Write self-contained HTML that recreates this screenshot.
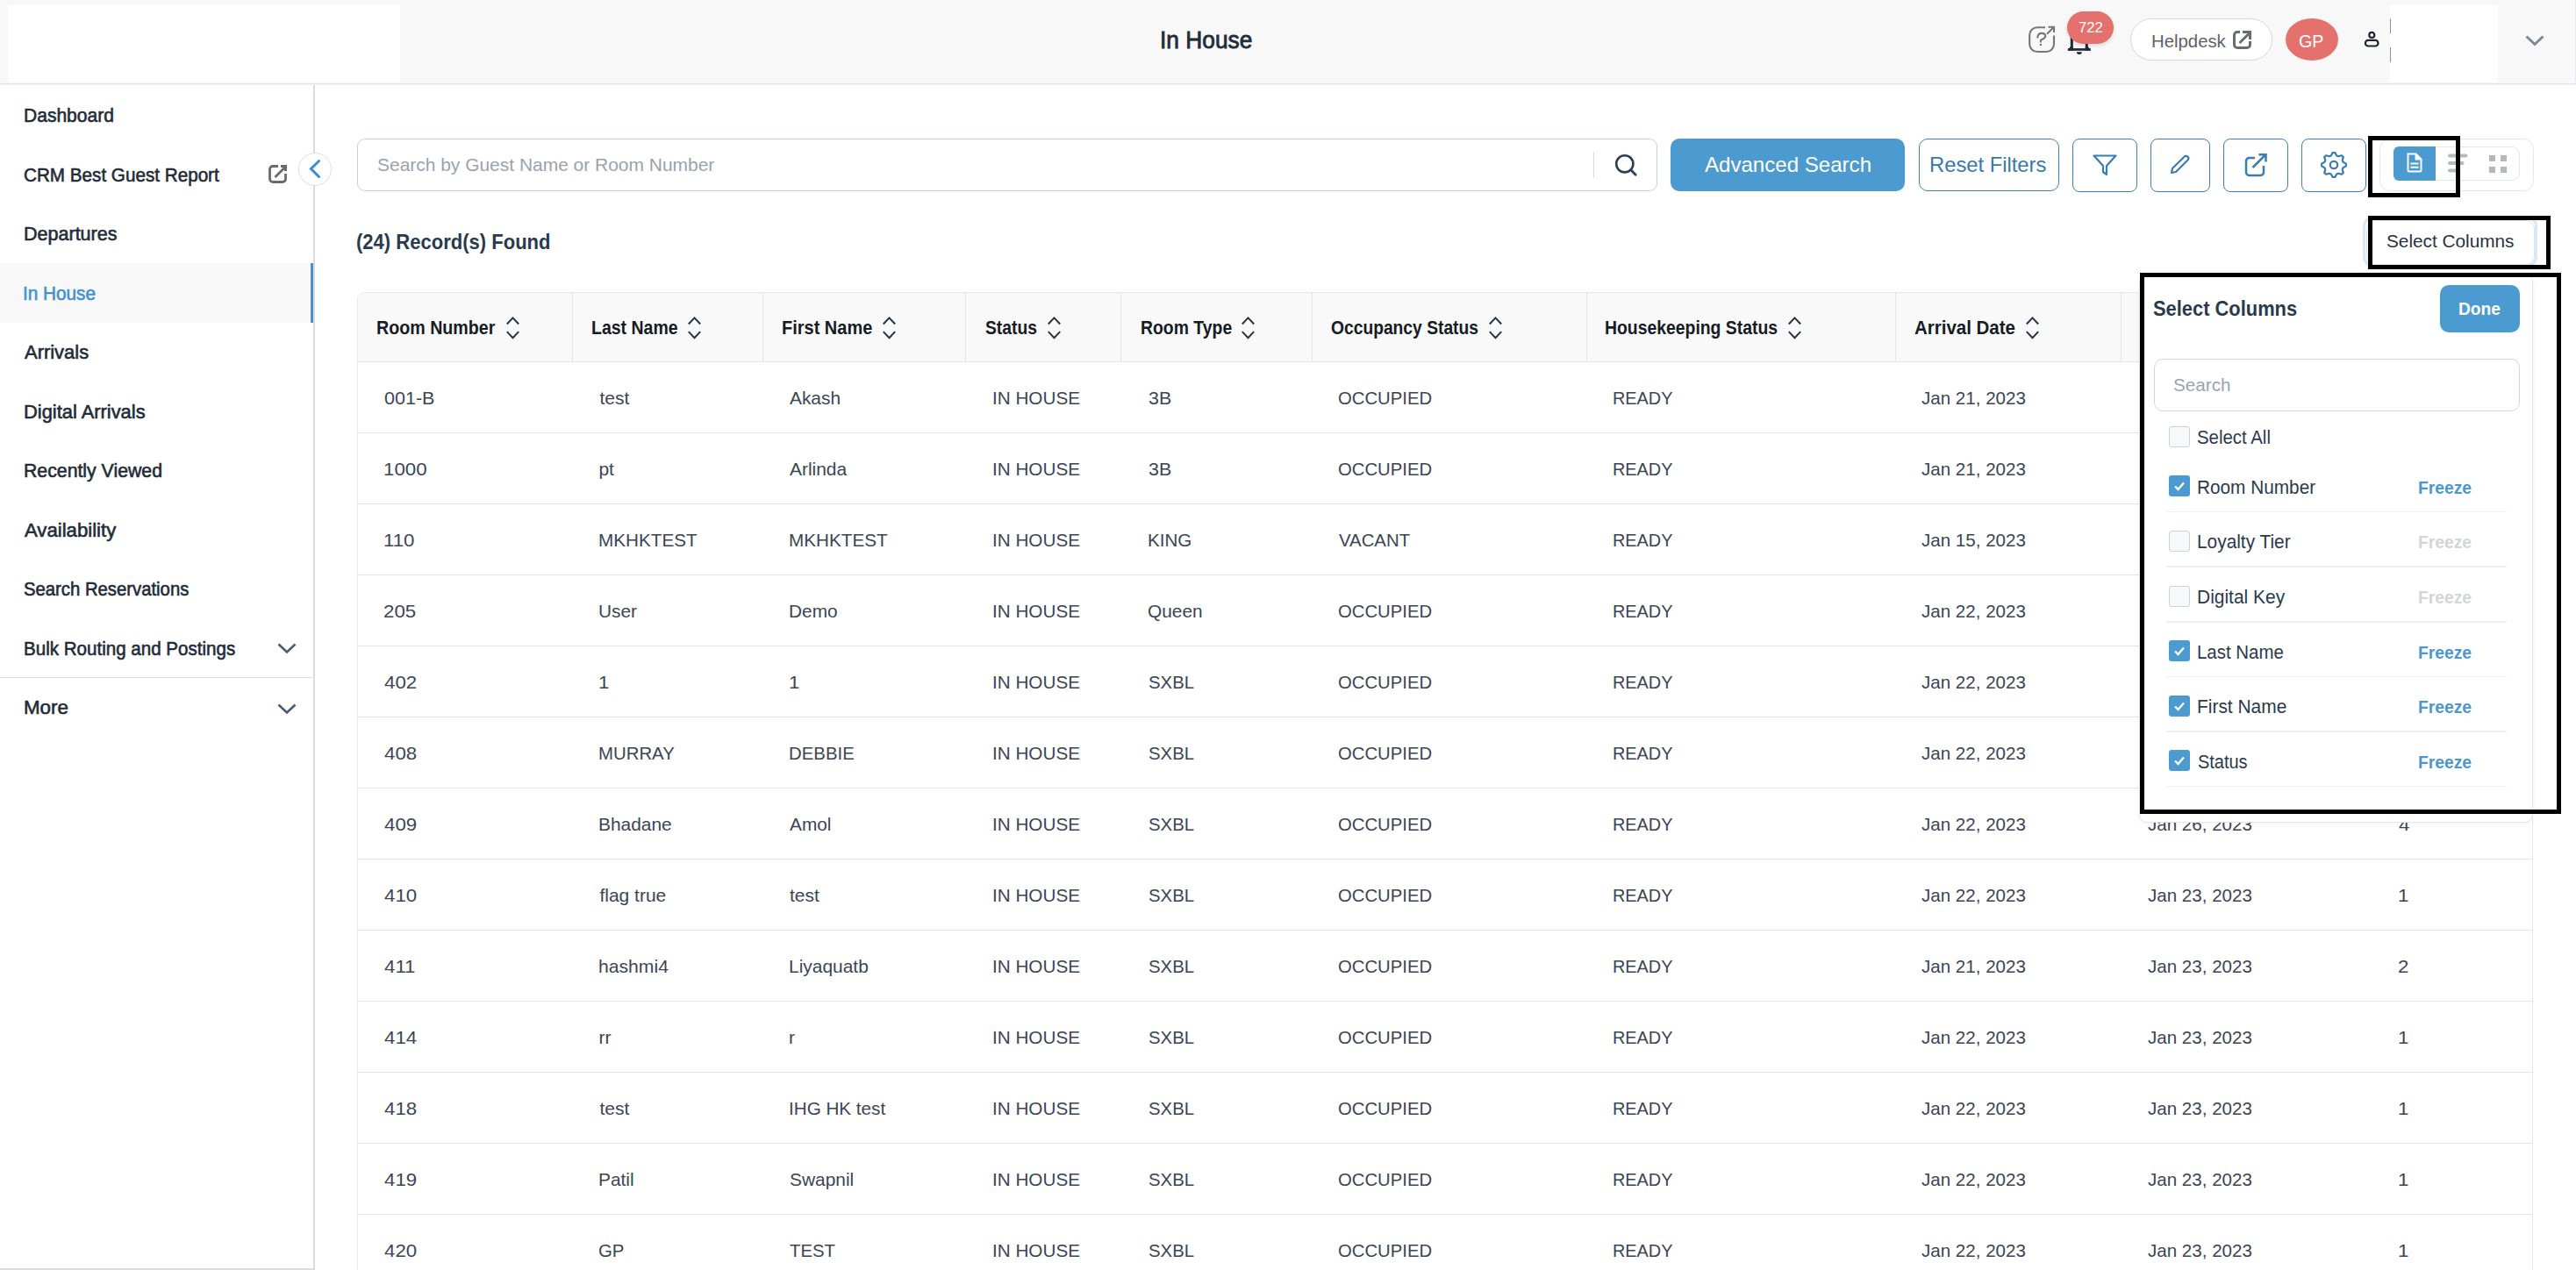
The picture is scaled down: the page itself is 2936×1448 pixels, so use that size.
<!DOCTYPE html>
<html><head><meta charset="utf-8"><title>In House</title>
<style>
html,body{margin:0;padding:0;}
body{width:2936px;height:1448px;overflow:hidden;position:relative;background:#fff;font-family:"Liberation Sans", sans-serif;}
</style></head><body>
<div style="position:absolute;left:0.00px;top:0.00px;width:2936.00px;height:95.00px;box-sizing:border-box;background:#f8f8f8"></div>
<div style="position:absolute;left:0.00px;top:95.00px;width:2936.00px;height:1.00px;box-sizing:border-box;background:#e2e5e8"></div>
<div style="position:absolute;left:0.00px;top:96.00px;width:2936.00px;height:1.00px;box-sizing:border-box;background:#eff1f2"></div>
<div style="position:absolute;left:9.00px;top:6.00px;width:447.00px;height:87.00px;box-sizing:border-box;background:#ffffff"></div>
<div style="position:absolute;left:1322.35px;top:32.94px;font-size:27px;line-height:27px;font-weight:normal;color:#232c39;white-space:nowrap;transform:scaleX(0.9748);transform-origin:0 0;-webkit-text-stroke:0.8px #232c39;">In House</div>
<svg style="position:absolute;left:2312.00px;top:30.00px;overflow:visible" width="30" height="30" viewBox="0 0 30 30"><path d="M19 1.2 H10 A8.8 8.8 0 0 0 1.2 10 V20.2 A8.8 8.8 0 0 0 10 29 H20.2 A8.8 8.8 0 0 0 29 20.2 V10.5" fill="none" stroke="#777" stroke-width="2.1"/><path d="M21 8.8 L29 0.8 M22.5 0.8 H29 V7" fill="none" stroke="#777" stroke-width="2.1"/><path d="M10.35 12.6 C10.6 9.6 12.6 7.9 15.1 7.9 C17.6 7.9 19.2 9.4 19.2 11.4 C19.2 13.6 16.8 14.2 14.8 15.2 C14 15.7 13.8 16.4 13.8 17.8" fill="none" stroke="#777" stroke-width="2.1" stroke-linecap="round"/><circle cx="14" cy="20.9" r="1.25" fill="#777"/></svg>
<svg style="position:absolute;left:2356.00px;top:28.00px;overflow:visible" width="28" height="36" viewBox="0 0 28 36"><path d="M5.3 0 V27.5 M22.3 0 V27.5" stroke="#222b38" stroke-width="3"/><path d="M3.8 25 L0.8 29.8 H6.8 V25Z M23.8 25 L26.8 29.8 H20.8 V25Z" fill="#222b38"/><rect x="0.8" y="27.1" width="26" height="2.7" fill="#222b38"/><path d="M10.8 31.3 H16.8 A3 2.8 0 0 1 10.8 31.3Z" fill="#222b38"/></svg>
<div style="position:absolute;left:2356px;top:12.5px;width:53px;height:37px;border-radius:19px;background:#e5716d;box-shadow:0 2px 4px rgba(0,0,0,0.12)"></div>
<div style="position:absolute;left:2368.90px;top:22.61px;font-size:17px;line-height:17px;font-weight:normal;color:#ffffff;white-space:nowrap;transform:scaleX(0.9782);transform-origin:0 0;">722</div>
<div style="position:absolute;left:2428.00px;top:21.00px;width:162.00px;height:48.00px;box-sizing:border-box;background:#fff;border:1.5px solid #d5d8e2;border-radius:24px"></div>
<div style="position:absolute;left:2451.53px;top:36.32px;font-size:21px;line-height:21px;font-weight:normal;color:#5f6267;white-space:nowrap;transform:scaleX(0.9684);transform-origin:0 0;">Helpdesk</div>
<svg style="position:absolute;left:2545.00px;top:35.00px;overflow:visible" width="21" height="21" viewBox="0 0 21 21"><path d="M8 1.5 H5 A3.5 3.5 0 0 0 1.5 5 V16 A3.5 3.5 0 0 0 5 19.5 H16 A3.5 3.5 0 0 0 19.5 16 V12" fill="none" stroke="#6b6c6f" stroke-width="3"/><path d="M7.5 14 L18 3.5" stroke="#6b6c6f" stroke-width="3"/><path d="M11 0 H21 V10 H18 V3 H11Z" fill="#6b6c6f"/></svg>
<div style="position:absolute;left:2605.00px;top:21.00px;width:60.00px;height:48.00px;box-sizing:border-box;background:#e5716d;border-radius:50%"></div>
<div style="position:absolute;left:2620.22px;top:36.57px;font-size:20px;line-height:20px;font-weight:normal;color:#ffffff;white-space:nowrap;transform:scaleX(0.9834);transform-origin:0 0;">GP</div>
<svg style="position:absolute;left:2694.00px;top:35.00px;overflow:visible" width="18" height="19" viewBox="0 0 18 19"><circle cx="9.3" cy="4.9" r="3.0" fill="none" stroke="#1c2633" stroke-width="2.2"/><rect x="1.9" y="10.9" width="14.6" height="6.6" rx="3.3" fill="none" stroke="#1c2633" stroke-width="2.2"/></svg>
<div style="position:absolute;left:2724.00px;top:6.00px;width:123.00px;height:88.00px;box-sizing:border-box;background:#ffffff"></div>
<div style="position:absolute;left:2935.00px;top:0.00px;width:1.00px;height:95.00px;box-sizing:border-box;background:#e9ebec"></div>
<div style="position:absolute;left:2724.00px;top:21.00px;width:1.20px;height:16.60px;box-sizing:border-box;background:#8e9398"></div>
<div style="position:absolute;left:2724.00px;top:54.00px;width:1.20px;height:16.70px;box-sizing:border-box;background:#8e9398"></div>
<svg style="position:absolute;left:2878.00px;top:40.00px;overflow:visible" width="22" height="12" viewBox="0 0 22 12"><path d="M1.5 1.5 L11 10.5 L20.5 1.5" fill="none" stroke="#7c8a94" stroke-width="3"/></svg>
<div style="position:absolute;left:357.00px;top:97.00px;width:2.00px;height:1351.00px;box-sizing:border-box;background:#dcdcdc"></div>
<div style="position:absolute;left:0.00px;top:1446.00px;width:359.00px;height:2.00px;box-sizing:border-box;background:#dcdcdc"></div>
<div style="position:absolute;left:26.64px;top:121.08px;font-size:22px;line-height:22px;font-weight:normal;color:#222b38;white-space:nowrap;transform:scaleX(0.9564);transform-origin:0 0;-webkit-text-stroke:0.6px #222b38;">Dashboard</div>
<div style="position:absolute;left:26.66px;top:188.58px;font-size:22px;line-height:22px;font-weight:normal;color:#222b38;white-space:nowrap;transform:scaleX(0.9391);transform-origin:0 0;-webkit-text-stroke:0.6px #222b38;">CRM Best Guest Report</div>
<div style="position:absolute;left:26.62px;top:256.08px;font-size:22px;line-height:22px;font-weight:normal;color:#222b38;white-space:nowrap;transform:scaleX(0.9784);transform-origin:0 0;-webkit-text-stroke:0.6px #222b38;">Departures</div>
<div style="position:absolute;left:0.00px;top:300.00px;width:357.00px;height:67.50px;box-sizing:border-box;background:#f8f8f8"></div>
<div style="position:absolute;left:354.00px;top:300.00px;width:3.00px;height:67.50px;box-sizing:border-box;background:#4a90c9"></div>
<div style="position:absolute;left:25.71px;top:323.58px;font-size:22px;line-height:22px;font-weight:normal;color:#4191cc;white-space:nowrap;transform:scaleX(0.9427);transform-origin:0 0;-webkit-text-stroke:0.6px #4191cc;">In House</div>
<div style="position:absolute;left:27.60px;top:391.08px;font-size:22px;line-height:22px;font-weight:normal;color:#222b38;white-space:nowrap;transform:scaleX(0.9968);transform-origin:0 0;-webkit-text-stroke:0.6px #222b38;">Arrivals</div>
<div style="position:absolute;left:26.61px;top:458.58px;font-size:22px;line-height:22px;font-weight:normal;color:#222b38;white-space:nowrap;transform:scaleX(0.9944);transform-origin:0 0;-webkit-text-stroke:0.6px #222b38;">Digital Arrivals</div>
<div style="position:absolute;left:26.63px;top:526.08px;font-size:22px;line-height:22px;font-weight:normal;color:#222b38;white-space:nowrap;transform:scaleX(0.9663);transform-origin:0 0;-webkit-text-stroke:0.6px #222b38;">Recently Viewed</div>
<div style="position:absolute;left:27.60px;top:593.58px;font-size:22px;line-height:22px;font-weight:normal;color:#222b38;white-space:nowrap;transform:scaleX(1.0064);transform-origin:0 0;-webkit-text-stroke:0.6px #222b38;">Availability</div>
<div style="position:absolute;left:26.68px;top:661.08px;font-size:22px;line-height:22px;font-weight:normal;color:#222b38;white-space:nowrap;transform:scaleX(0.9222);transform-origin:0 0;-webkit-text-stroke:0.6px #222b38;">Search Reservations</div>
<div style="position:absolute;left:26.67px;top:728.58px;font-size:22px;line-height:22px;font-weight:normal;color:#222b38;white-space:nowrap;transform:scaleX(0.9348);transform-origin:0 0;-webkit-text-stroke:0.6px #222b38;">Bulk Routing and Postings</div>
<div style="position:absolute;left:0.00px;top:772.00px;width:357.00px;height:1.00px;box-sizing:border-box;background:#dedede"></div>
<div style="position:absolute;left:26.59px;top:795.98px;font-size:22px;line-height:22px;font-weight:normal;color:#222b38;white-space:nowrap;transform:scaleX(1.0146);transform-origin:0 0;-webkit-text-stroke:0.6px #222b38;">More</div>
<svg style="position:absolute;left:316.00px;top:733.00px;overflow:visible" width="22" height="13" viewBox="0 0 22 13"><path d="M1.5 1.5 L11 10.5 L20.5 1.5" fill="none" stroke="#4b5a75" stroke-width="2.6"/></svg>
<svg style="position:absolute;left:316.00px;top:801.50px;overflow:visible" width="22" height="13" viewBox="0 0 22 13"><path d="M1.5 1.5 L11 10.5 L20.5 1.5" fill="none" stroke="#4b5a75" stroke-width="2.6"/></svg>
<svg style="position:absolute;left:306.00px;top:188.00px;overflow:visible" width="21" height="21" viewBox="0 0 21 21"><path d="M11 1.5 H5 A3.5 3.5 0 0 0 1.5 5 V16 A3.5 3.5 0 0 0 5 19.5 H16 A3.5 3.5 0 0 0 19.5 16 V10" fill="none" stroke="#6a6b6e" stroke-width="2.8"/><path d="M7.5 14 L18 3.5" stroke="#6a6b6e" stroke-width="2.8"/><path d="M14 0 H21 V7 H18 V3 H14Z" fill="#6a6b6e"/></svg>
<div style="position:absolute;left:340.00px;top:174.00px;width:38.00px;height:38.00px;box-sizing:border-box;background:#fff;border:1.5px solid #dedede;border-radius:50%"></div>
<svg style="position:absolute;left:352.00px;top:182.00px;overflow:visible" width="14" height="22" viewBox="0 0 14 22"><path d="M11.5 1.5 L2.5 10.5 L11.5 19.5" fill="none" stroke="#3a8dd3" stroke-width="3" stroke-linecap="round"/></svg>
<div style="position:absolute;left:407.00px;top:158.00px;width:1482.00px;height:60.00px;box-sizing:border-box;background:#fff;border:1.5px solid #c9d2da;border-radius:9px"></div>
<div style="position:absolute;left:429.70px;top:177.32px;font-size:21px;line-height:21px;font-weight:normal;color:#98a3ad;white-space:nowrap;transform:scaleX(0.9978);transform-origin:0 0;">Search by Guest Name or Room Number</div>
<div style="position:absolute;left:1816.00px;top:173.00px;width:1.00px;height:30.00px;box-sizing:border-box;background:#d3d8dd"></div>
<svg style="position:absolute;left:1840.00px;top:175.00px;overflow:visible" width="26" height="26" viewBox="0 0 26 26"><circle cx="11.8" cy="11.8" r="9.6" fill="none" stroke="#2d3e4f" stroke-width="2.6"/><path d="M18.8 18.8 L24.2 24.2" stroke="#2d3e4f" stroke-width="2.8" stroke-linecap="round"/></svg>
<div style="position:absolute;left:1904.00px;top:158.00px;width:267.00px;height:60.00px;box-sizing:border-box;background:#4b9ad0;border-radius:10px"></div>
<div style="position:absolute;left:1943.00px;top:175.58px;font-size:24px;line-height:24px;font-weight:normal;color:#ffffff;white-space:nowrap;transform:scaleX(1.0031);transform-origin:0 0;">Advanced Search</div>
<div style="position:absolute;left:2186.50px;top:158.00px;width:160.50px;height:60.00px;box-sizing:border-box;background:#fff;border:1.5px solid #3e80b2;border-radius:10px"></div>
<div style="position:absolute;left:2199.41px;top:175.58px;font-size:24px;line-height:24px;font-weight:normal;color:#3a78aa;white-space:nowrap;transform:scaleX(0.9903);transform-origin:0 0;">Reset Filters</div>
<div style="position:absolute;left:2362.00px;top:158.00px;width:74.00px;height:61.00px;box-sizing:border-box;background:#fff;border:1.5px solid #3e80b2;border-radius:8px"></div>
<div style="position:absolute;left:2451.00px;top:158.00px;width:68.00px;height:61.00px;box-sizing:border-box;background:#fff;border:1.5px solid #3e80b2;border-radius:8px"></div>
<div style="position:absolute;left:2534.00px;top:158.00px;width:74.00px;height:61.00px;box-sizing:border-box;background:#fff;border:1.5px solid #3e80b2;border-radius:8px"></div>
<div style="position:absolute;left:2623.00px;top:158.00px;width:74.00px;height:61.00px;box-sizing:border-box;background:#fff;border:1.5px solid #3e80b2;border-radius:8px"></div>
<svg style="position:absolute;left:2385.00px;top:176.00px;overflow:visible" width="28" height="24" viewBox="0 0 28 24"><path d="M1.5 1.5 H26.5 L16 13 V23 L12 20 V13 Z" fill="none" stroke="#3a7db0" stroke-width="2.2" stroke-linejoin="round"/></svg>
<svg style="position:absolute;left:2473.00px;top:177.00px;overflow:visible" width="23" height="22" viewBox="0 0 23 22"><path d="M2 20 L3 15 L16.5 1.8 A2.2 2.2 0 0 1 20.5 5.5 L7 19 Z" fill="none" stroke="#3a7db0" stroke-width="2.2" stroke-linejoin="round"/></svg>
<svg style="position:absolute;left:2558.00px;top:175.00px;overflow:visible" width="26" height="26" viewBox="0 0 26 26"><path d="M12 5 H5.5 A3.5 3.5 0 0 0 2 8.5 V21.5 A3.5 3.5 0 0 0 5.5 25 H18.5 A3.5 3.5 0 0 0 22 21.5 V14" fill="none" stroke="#3a7db0" stroke-width="2.5"/><path d="M9.5 16 L24.5 1.2 M16.5 1.2 H24.5 V9.5" fill="none" stroke="#3a7db0" stroke-width="2.5"/></svg>
<svg style="position:absolute;left:2645.00px;top:173.00px;overflow:visible" width="30" height="30" viewBox="0 0 30 30"><path d="M13.63 1.07 L16.37 1.07 L18.19 4.47 L20.19 5.30 L23.88 4.18 L25.82 6.12 L24.70 9.81 L25.53 11.81 L28.93 13.63 L28.93 16.37 L25.53 18.19 L24.70 20.19 L25.82 23.88 L23.88 25.82 L20.19 24.70 L18.19 25.53 L16.37 28.93 L13.63 28.93 L11.81 25.53 L9.81 24.70 L6.12 25.82 L4.18 23.88 L5.30 20.19 L4.47 18.19 L1.07 16.37 L1.07 13.63 L4.47 11.81 L5.30 9.81 L4.18 6.12 L6.12 4.18 L9.81 5.30 L11.81 4.47Z" fill="none" stroke="#3a7db0" stroke-width="2.2" stroke-linejoin="round"/><circle cx="15" cy="15" r="4.2" fill="none" stroke="#3a7db0" stroke-width="2.2"/></svg>
<div style="position:absolute;left:2712.00px;top:158.00px;width:176.00px;height:60.00px;box-sizing:border-box;background:#fff;border:1.5px solid #e4e8eb;border-radius:12px"></div>
<div style="position:absolute;left:2728.00px;top:167.00px;width:144.00px;height:39.00px;box-sizing:border-box;background:#fff;border:1.5px solid #e4e8eb;border-radius:9px"></div>
<div style="position:absolute;left:2728px;top:167px;width:48px;height:39px;background:#4b9ad0;border-radius:6px 0 0 6px"></div>
<svg style="position:absolute;left:2743.00px;top:173.50px;overflow:visible" width="18" height="23" viewBox="0 0 18 23"><path d="M1.5 1.5 H10.5 L16.5 7.5 V20 A1.5 1.5 0 0 1 15 21.5 H3 A1.5 1.5 0 0 1 1.5 20 Z" fill="none" stroke="#fff" stroke-width="2"/><path d="M4.5 12.5 H13.5 M4.5 16.8 H13.5" stroke="#fff" stroke-width="2"/><path d="M10.3 1.5 V7.7 H16.5 Z" fill="#fff" stroke="#fff" stroke-width="1.6" stroke-linejoin="round"/></svg>
<svg style="position:absolute;left:2790.00px;top:175.00px;overflow:visible" width="23" height="23" viewBox="0 0 23 23"><path d="M2 2.6 H20.5 M2 11 H16.5 M2 19.6 H9" stroke="#b4babf" stroke-width="4" stroke-linecap="round"/></svg>
<div style="position:absolute;left:2837.00px;top:177.00px;width:7.00px;height:7.00px;box-sizing:border-box;background:#b1b8be"></div>
<div style="position:absolute;left:2837.00px;top:190.00px;width:7.00px;height:7.00px;box-sizing:border-box;background:#b1b8be"></div>
<div style="position:absolute;left:2850.00px;top:177.00px;width:7.00px;height:7.00px;box-sizing:border-box;background:#b1b8be"></div>
<div style="position:absolute;left:2850.00px;top:190.00px;width:7.00px;height:7.00px;box-sizing:border-box;background:#b1b8be"></div>
<div style="position:absolute;left:2699.00px;top:155.00px;width:104.50px;height:69.50px;box-sizing:border-box;border:5px solid #000"></div>
<div style="position:absolute;left:406.08px;top:264.48px;font-size:24px;line-height:24px;font-weight:bold;color:#2a3a4e;white-space:nowrap;transform:scaleX(0.9179);transform-origin:0 0;">(24) Record(s) Found</div>
<div style="position:absolute;left:2693.00px;top:246.00px;width:199.00px;height:59.00px;box-sizing:border-box;border:3px solid #d8e8f6;border-radius:12px"></div>
<div style="position:absolute;left:2696.50px;top:250.50px;width:192.50px;height:51.00px;box-sizing:border-box;background:#fff;border:1px solid #dfe3e7;border-radius:10px"></div>
<div style="position:absolute;left:2720.10px;top:265.15px;font-size:20.5px;line-height:20.5px;font-weight:normal;color:#2a3240;white-space:nowrap;transform:scaleX(1.0132);transform-origin:0 0;">Select Columns</div>
<div style="position:absolute;left:2699.00px;top:246.00px;width:208.00px;height:60.50px;box-sizing:border-box;border:5px solid #000"></div>
<div style="position:absolute;left:407px;top:333px;width:2480px;height:1135px;box-sizing:border-box;border:1.5px solid #e6e9ec;border-radius:9px;background:#fff"></div>
<div style="position:absolute;left:408px;top:334px;width:2478px;height:78px;background:#f9f9f9;border-radius:8px 8px 0 0"></div>
<div style="position:absolute;left:407.00px;top:411.50px;width:2480.00px;height:1.50px;box-sizing:border-box;background:#e6e8ea"></div>
<div style="position:absolute;left:652.20px;top:334.00px;width:1.00px;height:78.00px;box-sizing:border-box;background:#e4e6e8"></div>
<div style="position:absolute;left:869.30px;top:334.00px;width:1.00px;height:78.00px;box-sizing:border-box;background:#e4e6e8"></div>
<div style="position:absolute;left:1100.20px;top:334.00px;width:1.00px;height:78.00px;box-sizing:border-box;background:#e4e6e8"></div>
<div style="position:absolute;left:1277.40px;top:334.00px;width:1.00px;height:78.00px;box-sizing:border-box;background:#e4e6e8"></div>
<div style="position:absolute;left:1495.30px;top:334.00px;width:1.00px;height:78.00px;box-sizing:border-box;background:#e4e6e8"></div>
<div style="position:absolute;left:1807.60px;top:334.00px;width:1.00px;height:78.00px;box-sizing:border-box;background:#e4e6e8"></div>
<div style="position:absolute;left:2159.50px;top:334.00px;width:1.00px;height:78.00px;box-sizing:border-box;background:#e4e6e8"></div>
<div style="position:absolute;left:2417.10px;top:334.00px;width:1.00px;height:78.00px;box-sizing:border-box;background:#e4e6e8"></div>
<div style="position:absolute;left:2700.00px;top:334.00px;width:1.00px;height:78.00px;box-sizing:border-box;background:#e4e6e8"></div>
<div style="position:absolute;left:429.39px;top:363.50px;font-size:21.5px;line-height:21.5px;font-weight:bold;color:#161c25;white-space:nowrap;transform:scaleX(0.9144);transform-origin:0 0;">Room Number</div>
<svg style="position:absolute;left:576.90px;top:361.00px;overflow:visible" width="16" height="26" viewBox="0 0 16 26"><path d="M0.8 8.5 L7.5 1.4 L14.2 8.5 M0.8 17.1 L7.5 24.2 L14.2 17.1" fill="none" stroke="#243447" stroke-width="2"/></svg>
<div style="position:absolute;left:673.99px;top:363.50px;font-size:21.5px;line-height:21.5px;font-weight:bold;color:#161c25;white-space:nowrap;transform:scaleX(0.9074);transform-origin:0 0;">Last Name</div>
<svg style="position:absolute;left:784.20px;top:361.00px;overflow:visible" width="16" height="26" viewBox="0 0 16 26"><path d="M0.8 8.5 L7.5 1.4 L14.2 8.5 M0.8 17.1 L7.5 24.2 L14.2 17.1" fill="none" stroke="#243447" stroke-width="2"/></svg>
<div style="position:absolute;left:891.27px;top:363.50px;font-size:21.5px;line-height:21.5px;font-weight:bold;color:#161c25;white-space:nowrap;transform:scaleX(0.9295);transform-origin:0 0;">First Name</div>
<svg style="position:absolute;left:1006.10px;top:361.00px;overflow:visible" width="16" height="26" viewBox="0 0 16 26"><path d="M0.8 8.5 L7.5 1.4 L14.2 8.5 M0.8 17.1 L7.5 24.2 L14.2 17.1" fill="none" stroke="#243447" stroke-width="2"/></svg>
<div style="position:absolute;left:1123.40px;top:363.50px;font-size:21.5px;line-height:21.5px;font-weight:bold;color:#161c25;white-space:nowrap;transform:scaleX(0.8973);transform-origin:0 0;">Status</div>
<svg style="position:absolute;left:1193.90px;top:361.00px;overflow:visible" width="16" height="26" viewBox="0 0 16 26"><path d="M0.8 8.5 L7.5 1.4 L14.2 8.5 M0.8 17.1 L7.5 24.2 L14.2 17.1" fill="none" stroke="#243447" stroke-width="2"/></svg>
<div style="position:absolute;left:1299.70px;top:363.50px;font-size:21.5px;line-height:21.5px;font-weight:bold;color:#161c25;white-space:nowrap;transform:scaleX(0.9021);transform-origin:0 0;">Room Type</div>
<svg style="position:absolute;left:1415.40px;top:361.00px;overflow:visible" width="16" height="26" viewBox="0 0 16 26"><path d="M0.8 8.5 L7.5 1.4 L14.2 8.5 M0.8 17.1 L7.5 24.2 L14.2 17.1" fill="none" stroke="#243447" stroke-width="2"/></svg>
<div style="position:absolute;left:1517.40px;top:363.50px;font-size:21.5px;line-height:21.5px;font-weight:bold;color:#161c25;white-space:nowrap;transform:scaleX(0.8954);transform-origin:0 0;">Occupancy Status</div>
<svg style="position:absolute;left:1696.90px;top:361.00px;overflow:visible" width="16" height="26" viewBox="0 0 16 26"><path d="M0.8 8.5 L7.5 1.4 L14.2 8.5 M0.8 17.1 L7.5 24.2 L14.2 17.1" fill="none" stroke="#243447" stroke-width="2"/></svg>
<div style="position:absolute;left:1829.30px;top:363.50px;font-size:21.5px;line-height:21.5px;font-weight:bold;color:#161c25;white-space:nowrap;transform:scaleX(0.9013);transform-origin:0 0;">Housekeeping Status</div>
<svg style="position:absolute;left:2037.90px;top:361.00px;overflow:visible" width="16" height="26" viewBox="0 0 16 26"><path d="M0.8 8.5 L7.5 1.4 L14.2 8.5 M0.8 17.1 L7.5 24.2 L14.2 17.1" fill="none" stroke="#243447" stroke-width="2"/></svg>
<div style="position:absolute;left:2182.10px;top:363.50px;font-size:21.5px;line-height:21.5px;font-weight:bold;color:#161c25;white-space:nowrap;transform:scaleX(0.9525);transform-origin:0 0;">Arrival Date</div>
<svg style="position:absolute;left:2308.60px;top:361.00px;overflow:visible" width="16" height="26" viewBox="0 0 16 26"><path d="M0.8 8.5 L7.5 1.4 L14.2 8.5 M0.8 17.1 L7.5 24.2 L14.2 17.1" fill="none" stroke="#243447" stroke-width="2"/></svg>
<div style="position:absolute;left:2438.00px;top:363.50px;font-size:21.5px;line-height:21.5px;font-weight:bold;color:#161c25;white-space:nowrap;">Departure Date</div>
<div style="position:absolute;left:2722.00px;top:363.50px;font-size:21.5px;line-height:21.5px;font-weight:bold;color:#161c25;white-space:nowrap;">Adults</div>
<div style="position:absolute;left:408.00px;top:493.00px;width:2478.00px;height:1.00px;box-sizing:border-box;background:#e3e6e9"></div>
<div style="position:absolute;left:438.00px;top:443.02px;font-size:21px;line-height:21px;font-weight:normal;color:#3b4555;white-space:nowrap;transform:scaleX(1.0240);transform-origin:0 0;">001-B</div>
<div style="position:absolute;left:683.40px;top:443.02px;font-size:21px;line-height:21px;font-weight:normal;color:#3b4555;white-space:nowrap;">test</div>
<div style="position:absolute;left:900.00px;top:443.02px;font-size:21px;line-height:21px;font-weight:normal;color:#3b4555;white-space:nowrap;transform:scaleX(0.9940);transform-origin:0 0;">Akash</div>
<div style="position:absolute;left:1131.02px;top:443.02px;font-size:21px;line-height:21px;font-weight:normal;color:#3b4555;white-space:nowrap;transform:scaleX(0.9850);transform-origin:0 0;">IN HOUSE</div>
<div style="position:absolute;left:1308.60px;top:443.02px;font-size:21px;line-height:21px;font-weight:normal;color:#3b4555;white-space:nowrap;transform:scaleX(1.0200);transform-origin:0 0;">3B</div>
<div style="position:absolute;left:1525.03px;top:443.02px;font-size:21px;line-height:21px;font-weight:normal;color:#3b4555;white-space:nowrap;transform:scaleX(0.9660);transform-origin:0 0;">OCCUPIED</div>
<div style="position:absolute;left:1837.85px;top:443.02px;font-size:21px;line-height:21px;font-weight:normal;color:#3b4555;white-space:nowrap;transform:scaleX(0.9460);transform-origin:0 0;">READY</div>
<div style="position:absolute;left:2190.20px;top:443.02px;font-size:21px;line-height:21px;font-weight:normal;color:#3b4555;white-space:nowrap;transform:scaleX(0.9790);transform-origin:0 0;">Jan 21, 2023</div>
<div style="position:absolute;left:2448.00px;top:443.02px;font-size:21px;line-height:21px;font-weight:normal;color:#3b4555;white-space:nowrap;transform:scaleX(0.9790);transform-origin:0 0;">Jan 23, 2023</div>
<div style="position:absolute;left:2732.94px;top:443.02px;font-size:21px;line-height:21px;font-weight:normal;color:#3b4555;white-space:nowrap;transform:scaleX(1.0600);transform-origin:0 0;">1</div>
<div style="position:absolute;left:408.00px;top:574.00px;width:2478.00px;height:1.00px;box-sizing:border-box;background:#e3e6e9"></div>
<div style="position:absolute;left:436.94px;top:524.02px;font-size:21px;line-height:21px;font-weight:normal;color:#3b4555;white-space:nowrap;transform:scaleX(1.0600);transform-origin:0 0;">1000</div>
<div style="position:absolute;left:682.40px;top:524.02px;font-size:21px;line-height:21px;font-weight:normal;color:#3b4555;white-space:nowrap;">pt</div>
<div style="position:absolute;left:900.00px;top:524.02px;font-size:21px;line-height:21px;font-weight:normal;color:#3b4555;white-space:nowrap;transform:scaleX(0.9957);transform-origin:0 0;">Arlinda</div>
<div style="position:absolute;left:1131.02px;top:524.02px;font-size:21px;line-height:21px;font-weight:normal;color:#3b4555;white-space:nowrap;transform:scaleX(0.9850);transform-origin:0 0;">IN HOUSE</div>
<div style="position:absolute;left:1308.60px;top:524.02px;font-size:21px;line-height:21px;font-weight:normal;color:#3b4555;white-space:nowrap;transform:scaleX(1.0200);transform-origin:0 0;">3B</div>
<div style="position:absolute;left:1525.03px;top:524.02px;font-size:21px;line-height:21px;font-weight:normal;color:#3b4555;white-space:nowrap;transform:scaleX(0.9660);transform-origin:0 0;">OCCUPIED</div>
<div style="position:absolute;left:1837.85px;top:524.02px;font-size:21px;line-height:21px;font-weight:normal;color:#3b4555;white-space:nowrap;transform:scaleX(0.9460);transform-origin:0 0;">READY</div>
<div style="position:absolute;left:2190.20px;top:524.02px;font-size:21px;line-height:21px;font-weight:normal;color:#3b4555;white-space:nowrap;transform:scaleX(0.9790);transform-origin:0 0;">Jan 21, 2023</div>
<div style="position:absolute;left:2448.00px;top:524.02px;font-size:21px;line-height:21px;font-weight:normal;color:#3b4555;white-space:nowrap;transform:scaleX(0.9790);transform-origin:0 0;">Jan 23, 2023</div>
<div style="position:absolute;left:2732.94px;top:524.02px;font-size:21px;line-height:21px;font-weight:normal;color:#3b4555;white-space:nowrap;transform:scaleX(1.0600);transform-origin:0 0;">1</div>
<div style="position:absolute;left:408.00px;top:655.00px;width:2478.00px;height:1.00px;box-sizing:border-box;background:#e3e6e9"></div>
<div style="position:absolute;left:436.94px;top:605.02px;font-size:21px;line-height:21px;font-weight:normal;color:#3b4555;white-space:nowrap;transform:scaleX(1.0600);transform-origin:0 0;">110</div>
<div style="position:absolute;left:682.41px;top:605.02px;font-size:21px;line-height:21px;font-weight:normal;color:#3b4555;white-space:nowrap;transform:scaleX(0.9850);transform-origin:0 0;">MKHKTEST</div>
<div style="position:absolute;left:899.01px;top:605.02px;font-size:21px;line-height:21px;font-weight:normal;color:#3b4555;white-space:nowrap;transform:scaleX(0.9850);transform-origin:0 0;">MKHKTEST</div>
<div style="position:absolute;left:1131.02px;top:605.02px;font-size:21px;line-height:21px;font-weight:normal;color:#3b4555;white-space:nowrap;transform:scaleX(0.9850);transform-origin:0 0;">IN HOUSE</div>
<div style="position:absolute;left:1307.62px;top:605.02px;font-size:21px;line-height:21px;font-weight:normal;color:#3b4555;white-space:nowrap;transform:scaleX(0.9800);transform-origin:0 0;">KING</div>
<div style="position:absolute;left:1526.00px;top:605.02px;font-size:21px;line-height:21px;font-weight:normal;color:#3b4555;white-space:nowrap;transform:scaleX(0.9700);transform-origin:0 0;">VACANT</div>
<div style="position:absolute;left:1837.85px;top:605.02px;font-size:21px;line-height:21px;font-weight:normal;color:#3b4555;white-space:nowrap;transform:scaleX(0.9460);transform-origin:0 0;">READY</div>
<div style="position:absolute;left:2190.20px;top:605.02px;font-size:21px;line-height:21px;font-weight:normal;color:#3b4555;white-space:nowrap;transform:scaleX(0.9790);transform-origin:0 0;">Jan 15, 2023</div>
<div style="position:absolute;left:2448.00px;top:605.02px;font-size:21px;line-height:21px;font-weight:normal;color:#3b4555;white-space:nowrap;transform:scaleX(0.9790);transform-origin:0 0;">Jan 23, 2023</div>
<div style="position:absolute;left:2732.94px;top:605.02px;font-size:21px;line-height:21px;font-weight:normal;color:#3b4555;white-space:nowrap;transform:scaleX(1.0600);transform-origin:0 0;">1</div>
<div style="position:absolute;left:408.00px;top:736.00px;width:2478.00px;height:1.00px;box-sizing:border-box;background:#e3e6e9"></div>
<div style="position:absolute;left:436.94px;top:686.02px;font-size:21px;line-height:21px;font-weight:normal;color:#3b4555;white-space:nowrap;transform:scaleX(1.0600);transform-origin:0 0;">205</div>
<div style="position:absolute;left:682.41px;top:686.02px;font-size:21px;line-height:21px;font-weight:normal;color:#3b4555;white-space:nowrap;transform:scaleX(0.9925);transform-origin:0 0;">User</div>
<div style="position:absolute;left:899.01px;top:686.02px;font-size:21px;line-height:21px;font-weight:normal;color:#3b4555;white-space:nowrap;transform:scaleX(0.9925);transform-origin:0 0;">Demo</div>
<div style="position:absolute;left:1131.02px;top:686.02px;font-size:21px;line-height:21px;font-weight:normal;color:#3b4555;white-space:nowrap;transform:scaleX(0.9850);transform-origin:0 0;">IN HOUSE</div>
<div style="position:absolute;left:1307.61px;top:686.02px;font-size:21px;line-height:21px;font-weight:normal;color:#3b4555;white-space:nowrap;transform:scaleX(0.9940);transform-origin:0 0;">Queen</div>
<div style="position:absolute;left:1525.03px;top:686.02px;font-size:21px;line-height:21px;font-weight:normal;color:#3b4555;white-space:nowrap;transform:scaleX(0.9660);transform-origin:0 0;">OCCUPIED</div>
<div style="position:absolute;left:1837.85px;top:686.02px;font-size:21px;line-height:21px;font-weight:normal;color:#3b4555;white-space:nowrap;transform:scaleX(0.9460);transform-origin:0 0;">READY</div>
<div style="position:absolute;left:2190.20px;top:686.02px;font-size:21px;line-height:21px;font-weight:normal;color:#3b4555;white-space:nowrap;transform:scaleX(0.9790);transform-origin:0 0;">Jan 22, 2023</div>
<div style="position:absolute;left:2448.00px;top:686.02px;font-size:21px;line-height:21px;font-weight:normal;color:#3b4555;white-space:nowrap;transform:scaleX(0.9790);transform-origin:0 0;">Jan 23, 2023</div>
<div style="position:absolute;left:2732.94px;top:686.02px;font-size:21px;line-height:21px;font-weight:normal;color:#3b4555;white-space:nowrap;transform:scaleX(1.0600);transform-origin:0 0;">1</div>
<div style="position:absolute;left:408.00px;top:817.00px;width:2478.00px;height:1.00px;box-sizing:border-box;background:#e3e6e9"></div>
<div style="position:absolute;left:438.00px;top:767.02px;font-size:21px;line-height:21px;font-weight:normal;color:#3b4555;white-space:nowrap;transform:scaleX(1.0600);transform-origin:0 0;">402</div>
<div style="position:absolute;left:682.34px;top:767.02px;font-size:21px;line-height:21px;font-weight:normal;color:#3b4555;white-space:nowrap;transform:scaleX(1.0600);transform-origin:0 0;">1</div>
<div style="position:absolute;left:898.94px;top:767.02px;font-size:21px;line-height:21px;font-weight:normal;color:#3b4555;white-space:nowrap;transform:scaleX(1.0600);transform-origin:0 0;">1</div>
<div style="position:absolute;left:1131.02px;top:767.02px;font-size:21px;line-height:21px;font-weight:normal;color:#3b4555;white-space:nowrap;transform:scaleX(0.9850);transform-origin:0 0;">IN HOUSE</div>
<div style="position:absolute;left:1308.60px;top:767.02px;font-size:21px;line-height:21px;font-weight:normal;color:#3b4555;white-space:nowrap;transform:scaleX(0.9700);transform-origin:0 0;">SXBL</div>
<div style="position:absolute;left:1525.03px;top:767.02px;font-size:21px;line-height:21px;font-weight:normal;color:#3b4555;white-space:nowrap;transform:scaleX(0.9660);transform-origin:0 0;">OCCUPIED</div>
<div style="position:absolute;left:1837.85px;top:767.02px;font-size:21px;line-height:21px;font-weight:normal;color:#3b4555;white-space:nowrap;transform:scaleX(0.9460);transform-origin:0 0;">READY</div>
<div style="position:absolute;left:2190.20px;top:767.02px;font-size:21px;line-height:21px;font-weight:normal;color:#3b4555;white-space:nowrap;transform:scaleX(0.9790);transform-origin:0 0;">Jan 22, 2023</div>
<div style="position:absolute;left:2448.00px;top:767.02px;font-size:21px;line-height:21px;font-weight:normal;color:#3b4555;white-space:nowrap;transform:scaleX(0.9790);transform-origin:0 0;">Jan 23, 2023</div>
<div style="position:absolute;left:2732.94px;top:767.02px;font-size:21px;line-height:21px;font-weight:normal;color:#3b4555;white-space:nowrap;transform:scaleX(1.0600);transform-origin:0 0;">1</div>
<div style="position:absolute;left:408.00px;top:898.00px;width:2478.00px;height:1.00px;box-sizing:border-box;background:#e3e6e9"></div>
<div style="position:absolute;left:438.00px;top:848.02px;font-size:21px;line-height:21px;font-weight:normal;color:#3b4555;white-space:nowrap;transform:scaleX(1.0600);transform-origin:0 0;">408</div>
<div style="position:absolute;left:682.43px;top:848.02px;font-size:21px;line-height:21px;font-weight:normal;color:#3b4555;white-space:nowrap;transform:scaleX(0.9700);transform-origin:0 0;">MURRAY</div>
<div style="position:absolute;left:899.03px;top:848.02px;font-size:21px;line-height:21px;font-weight:normal;color:#3b4555;white-space:nowrap;transform:scaleX(0.9700);transform-origin:0 0;">DEBBIE</div>
<div style="position:absolute;left:1131.02px;top:848.02px;font-size:21px;line-height:21px;font-weight:normal;color:#3b4555;white-space:nowrap;transform:scaleX(0.9850);transform-origin:0 0;">IN HOUSE</div>
<div style="position:absolute;left:1308.60px;top:848.02px;font-size:21px;line-height:21px;font-weight:normal;color:#3b4555;white-space:nowrap;transform:scaleX(0.9700);transform-origin:0 0;">SXBL</div>
<div style="position:absolute;left:1525.03px;top:848.02px;font-size:21px;line-height:21px;font-weight:normal;color:#3b4555;white-space:nowrap;transform:scaleX(0.9660);transform-origin:0 0;">OCCUPIED</div>
<div style="position:absolute;left:1837.85px;top:848.02px;font-size:21px;line-height:21px;font-weight:normal;color:#3b4555;white-space:nowrap;transform:scaleX(0.9460);transform-origin:0 0;">READY</div>
<div style="position:absolute;left:2190.20px;top:848.02px;font-size:21px;line-height:21px;font-weight:normal;color:#3b4555;white-space:nowrap;transform:scaleX(0.9790);transform-origin:0 0;">Jan 22, 2023</div>
<div style="position:absolute;left:2448.00px;top:848.02px;font-size:21px;line-height:21px;font-weight:normal;color:#3b4555;white-space:nowrap;transform:scaleX(0.9790);transform-origin:0 0;">Jan 23, 2023</div>
<div style="position:absolute;left:2732.94px;top:848.02px;font-size:21px;line-height:21px;font-weight:normal;color:#3b4555;white-space:nowrap;transform:scaleX(1.0600);transform-origin:0 0;">1</div>
<div style="position:absolute;left:408.00px;top:979.00px;width:2478.00px;height:1.00px;box-sizing:border-box;background:#e3e6e9"></div>
<div style="position:absolute;left:438.00px;top:929.02px;font-size:21px;line-height:21px;font-weight:normal;color:#3b4555;white-space:nowrap;transform:scaleX(1.0600);transform-origin:0 0;">409</div>
<div style="position:absolute;left:682.40px;top:929.02px;font-size:21px;line-height:21px;font-weight:normal;color:#3b4555;white-space:nowrap;transform:scaleX(0.9957);transform-origin:0 0;">Bhadane</div>
<div style="position:absolute;left:900.00px;top:929.02px;font-size:21px;line-height:21px;font-weight:normal;color:#3b4555;white-space:nowrap;transform:scaleX(0.9925);transform-origin:0 0;">Amol</div>
<div style="position:absolute;left:1131.02px;top:929.02px;font-size:21px;line-height:21px;font-weight:normal;color:#3b4555;white-space:nowrap;transform:scaleX(0.9850);transform-origin:0 0;">IN HOUSE</div>
<div style="position:absolute;left:1308.60px;top:929.02px;font-size:21px;line-height:21px;font-weight:normal;color:#3b4555;white-space:nowrap;transform:scaleX(0.9700);transform-origin:0 0;">SXBL</div>
<div style="position:absolute;left:1525.03px;top:929.02px;font-size:21px;line-height:21px;font-weight:normal;color:#3b4555;white-space:nowrap;transform:scaleX(0.9660);transform-origin:0 0;">OCCUPIED</div>
<div style="position:absolute;left:1837.85px;top:929.02px;font-size:21px;line-height:21px;font-weight:normal;color:#3b4555;white-space:nowrap;transform:scaleX(0.9460);transform-origin:0 0;">READY</div>
<div style="position:absolute;left:2190.20px;top:929.02px;font-size:21px;line-height:21px;font-weight:normal;color:#3b4555;white-space:nowrap;transform:scaleX(0.9790);transform-origin:0 0;">Jan 22, 2023</div>
<div style="position:absolute;left:2448.00px;top:929.02px;font-size:21px;line-height:21px;font-weight:normal;color:#3b4555;white-space:nowrap;transform:scaleX(0.9790);transform-origin:0 0;">Jan 26, 2023</div>
<div style="position:absolute;left:2734.00px;top:929.02px;font-size:21px;line-height:21px;font-weight:normal;color:#3b4555;white-space:nowrap;transform:scaleX(1.0600);transform-origin:0 0;">4</div>
<div style="position:absolute;left:408.00px;top:1060.00px;width:2478.00px;height:1.00px;box-sizing:border-box;background:#e3e6e9"></div>
<div style="position:absolute;left:438.00px;top:1010.02px;font-size:21px;line-height:21px;font-weight:normal;color:#3b4555;white-space:nowrap;transform:scaleX(1.0600);transform-origin:0 0;">410</div>
<div style="position:absolute;left:683.40px;top:1010.02px;font-size:21px;line-height:21px;font-weight:normal;color:#3b4555;white-space:nowrap;">flag true</div>
<div style="position:absolute;left:900.00px;top:1010.02px;font-size:21px;line-height:21px;font-weight:normal;color:#3b4555;white-space:nowrap;">test</div>
<div style="position:absolute;left:1131.02px;top:1010.02px;font-size:21px;line-height:21px;font-weight:normal;color:#3b4555;white-space:nowrap;transform:scaleX(0.9850);transform-origin:0 0;">IN HOUSE</div>
<div style="position:absolute;left:1308.60px;top:1010.02px;font-size:21px;line-height:21px;font-weight:normal;color:#3b4555;white-space:nowrap;transform:scaleX(0.9700);transform-origin:0 0;">SXBL</div>
<div style="position:absolute;left:1525.03px;top:1010.02px;font-size:21px;line-height:21px;font-weight:normal;color:#3b4555;white-space:nowrap;transform:scaleX(0.9660);transform-origin:0 0;">OCCUPIED</div>
<div style="position:absolute;left:1837.85px;top:1010.02px;font-size:21px;line-height:21px;font-weight:normal;color:#3b4555;white-space:nowrap;transform:scaleX(0.9460);transform-origin:0 0;">READY</div>
<div style="position:absolute;left:2190.20px;top:1010.02px;font-size:21px;line-height:21px;font-weight:normal;color:#3b4555;white-space:nowrap;transform:scaleX(0.9790);transform-origin:0 0;">Jan 22, 2023</div>
<div style="position:absolute;left:2448.00px;top:1010.02px;font-size:21px;line-height:21px;font-weight:normal;color:#3b4555;white-space:nowrap;transform:scaleX(0.9790);transform-origin:0 0;">Jan 23, 2023</div>
<div style="position:absolute;left:2732.94px;top:1010.02px;font-size:21px;line-height:21px;font-weight:normal;color:#3b4555;white-space:nowrap;transform:scaleX(1.0600);transform-origin:0 0;">1</div>
<div style="position:absolute;left:408.00px;top:1141.00px;width:2478.00px;height:1.00px;box-sizing:border-box;background:#e3e6e9"></div>
<div style="position:absolute;left:438.00px;top:1091.02px;font-size:21px;line-height:21px;font-weight:normal;color:#3b4555;white-space:nowrap;transform:scaleX(1.0600);transform-origin:0 0;">411</div>
<div style="position:absolute;left:682.39px;top:1091.02px;font-size:21px;line-height:21px;font-weight:normal;color:#3b4555;white-space:nowrap;transform:scaleX(1.0071);transform-origin:0 0;">hashmi4</div>
<div style="position:absolute;left:899.00px;top:1091.02px;font-size:21px;line-height:21px;font-weight:normal;color:#3b4555;white-space:nowrap;transform:scaleX(0.9967);transform-origin:0 0;">Liyaquatb</div>
<div style="position:absolute;left:1131.02px;top:1091.02px;font-size:21px;line-height:21px;font-weight:normal;color:#3b4555;white-space:nowrap;transform:scaleX(0.9850);transform-origin:0 0;">IN HOUSE</div>
<div style="position:absolute;left:1308.60px;top:1091.02px;font-size:21px;line-height:21px;font-weight:normal;color:#3b4555;white-space:nowrap;transform:scaleX(0.9700);transform-origin:0 0;">SXBL</div>
<div style="position:absolute;left:1525.03px;top:1091.02px;font-size:21px;line-height:21px;font-weight:normal;color:#3b4555;white-space:nowrap;transform:scaleX(0.9660);transform-origin:0 0;">OCCUPIED</div>
<div style="position:absolute;left:1837.85px;top:1091.02px;font-size:21px;line-height:21px;font-weight:normal;color:#3b4555;white-space:nowrap;transform:scaleX(0.9460);transform-origin:0 0;">READY</div>
<div style="position:absolute;left:2190.20px;top:1091.02px;font-size:21px;line-height:21px;font-weight:normal;color:#3b4555;white-space:nowrap;transform:scaleX(0.9790);transform-origin:0 0;">Jan 21, 2023</div>
<div style="position:absolute;left:2448.00px;top:1091.02px;font-size:21px;line-height:21px;font-weight:normal;color:#3b4555;white-space:nowrap;transform:scaleX(0.9790);transform-origin:0 0;">Jan 23, 2023</div>
<div style="position:absolute;left:2732.94px;top:1091.02px;font-size:21px;line-height:21px;font-weight:normal;color:#3b4555;white-space:nowrap;transform:scaleX(1.0600);transform-origin:0 0;">2</div>
<div style="position:absolute;left:408.00px;top:1222.00px;width:2478.00px;height:1.00px;box-sizing:border-box;background:#e3e6e9"></div>
<div style="position:absolute;left:438.00px;top:1172.02px;font-size:21px;line-height:21px;font-weight:normal;color:#3b4555;white-space:nowrap;transform:scaleX(1.0600);transform-origin:0 0;">414</div>
<div style="position:absolute;left:682.40px;top:1172.02px;font-size:21px;line-height:21px;font-weight:normal;color:#3b4555;white-space:nowrap;">rr</div>
<div style="position:absolute;left:899.00px;top:1172.02px;font-size:21px;line-height:21px;font-weight:normal;color:#3b4555;white-space:nowrap;">r</div>
<div style="position:absolute;left:1131.02px;top:1172.02px;font-size:21px;line-height:21px;font-weight:normal;color:#3b4555;white-space:nowrap;transform:scaleX(0.9850);transform-origin:0 0;">IN HOUSE</div>
<div style="position:absolute;left:1308.60px;top:1172.02px;font-size:21px;line-height:21px;font-weight:normal;color:#3b4555;white-space:nowrap;transform:scaleX(0.9700);transform-origin:0 0;">SXBL</div>
<div style="position:absolute;left:1525.03px;top:1172.02px;font-size:21px;line-height:21px;font-weight:normal;color:#3b4555;white-space:nowrap;transform:scaleX(0.9660);transform-origin:0 0;">OCCUPIED</div>
<div style="position:absolute;left:1837.85px;top:1172.02px;font-size:21px;line-height:21px;font-weight:normal;color:#3b4555;white-space:nowrap;transform:scaleX(0.9460);transform-origin:0 0;">READY</div>
<div style="position:absolute;left:2190.20px;top:1172.02px;font-size:21px;line-height:21px;font-weight:normal;color:#3b4555;white-space:nowrap;transform:scaleX(0.9790);transform-origin:0 0;">Jan 22, 2023</div>
<div style="position:absolute;left:2448.00px;top:1172.02px;font-size:21px;line-height:21px;font-weight:normal;color:#3b4555;white-space:nowrap;transform:scaleX(0.9790);transform-origin:0 0;">Jan 23, 2023</div>
<div style="position:absolute;left:2732.94px;top:1172.02px;font-size:21px;line-height:21px;font-weight:normal;color:#3b4555;white-space:nowrap;transform:scaleX(1.0600);transform-origin:0 0;">1</div>
<div style="position:absolute;left:408.00px;top:1303.00px;width:2478.00px;height:1.00px;box-sizing:border-box;background:#e3e6e9"></div>
<div style="position:absolute;left:438.00px;top:1253.02px;font-size:21px;line-height:21px;font-weight:normal;color:#3b4555;white-space:nowrap;transform:scaleX(1.0600);transform-origin:0 0;">418</div>
<div style="position:absolute;left:683.40px;top:1253.02px;font-size:21px;line-height:21px;font-weight:normal;color:#3b4555;white-space:nowrap;">test</div>
<div style="position:absolute;left:899.02px;top:1253.02px;font-size:21px;line-height:21px;font-weight:normal;color:#3b4555;white-space:nowrap;transform:scaleX(0.9833);transform-origin:0 0;">IHG HK test</div>
<div style="position:absolute;left:1131.02px;top:1253.02px;font-size:21px;line-height:21px;font-weight:normal;color:#3b4555;white-space:nowrap;transform:scaleX(0.9850);transform-origin:0 0;">IN HOUSE</div>
<div style="position:absolute;left:1308.60px;top:1253.02px;font-size:21px;line-height:21px;font-weight:normal;color:#3b4555;white-space:nowrap;transform:scaleX(0.9700);transform-origin:0 0;">SXBL</div>
<div style="position:absolute;left:1525.03px;top:1253.02px;font-size:21px;line-height:21px;font-weight:normal;color:#3b4555;white-space:nowrap;transform:scaleX(0.9660);transform-origin:0 0;">OCCUPIED</div>
<div style="position:absolute;left:1837.85px;top:1253.02px;font-size:21px;line-height:21px;font-weight:normal;color:#3b4555;white-space:nowrap;transform:scaleX(0.9460);transform-origin:0 0;">READY</div>
<div style="position:absolute;left:2190.20px;top:1253.02px;font-size:21px;line-height:21px;font-weight:normal;color:#3b4555;white-space:nowrap;transform:scaleX(0.9790);transform-origin:0 0;">Jan 22, 2023</div>
<div style="position:absolute;left:2448.00px;top:1253.02px;font-size:21px;line-height:21px;font-weight:normal;color:#3b4555;white-space:nowrap;transform:scaleX(0.9790);transform-origin:0 0;">Jan 23, 2023</div>
<div style="position:absolute;left:2732.94px;top:1253.02px;font-size:21px;line-height:21px;font-weight:normal;color:#3b4555;white-space:nowrap;transform:scaleX(1.0600);transform-origin:0 0;">1</div>
<div style="position:absolute;left:408.00px;top:1384.00px;width:2478.00px;height:1.00px;box-sizing:border-box;background:#e3e6e9"></div>
<div style="position:absolute;left:438.00px;top:1334.02px;font-size:21px;line-height:21px;font-weight:normal;color:#3b4555;white-space:nowrap;transform:scaleX(1.0600);transform-origin:0 0;">419</div>
<div style="position:absolute;left:682.41px;top:1334.02px;font-size:21px;line-height:21px;font-weight:normal;color:#3b4555;white-space:nowrap;transform:scaleX(0.9940);transform-origin:0 0;">Patil</div>
<div style="position:absolute;left:900.00px;top:1334.02px;font-size:21px;line-height:21px;font-weight:normal;color:#3b4555;white-space:nowrap;transform:scaleX(0.9957);transform-origin:0 0;">Swapnil</div>
<div style="position:absolute;left:1131.02px;top:1334.02px;font-size:21px;line-height:21px;font-weight:normal;color:#3b4555;white-space:nowrap;transform:scaleX(0.9850);transform-origin:0 0;">IN HOUSE</div>
<div style="position:absolute;left:1308.60px;top:1334.02px;font-size:21px;line-height:21px;font-weight:normal;color:#3b4555;white-space:nowrap;transform:scaleX(0.9700);transform-origin:0 0;">SXBL</div>
<div style="position:absolute;left:1525.03px;top:1334.02px;font-size:21px;line-height:21px;font-weight:normal;color:#3b4555;white-space:nowrap;transform:scaleX(0.9660);transform-origin:0 0;">OCCUPIED</div>
<div style="position:absolute;left:1837.85px;top:1334.02px;font-size:21px;line-height:21px;font-weight:normal;color:#3b4555;white-space:nowrap;transform:scaleX(0.9460);transform-origin:0 0;">READY</div>
<div style="position:absolute;left:2190.20px;top:1334.02px;font-size:21px;line-height:21px;font-weight:normal;color:#3b4555;white-space:nowrap;transform:scaleX(0.9790);transform-origin:0 0;">Jan 22, 2023</div>
<div style="position:absolute;left:2448.00px;top:1334.02px;font-size:21px;line-height:21px;font-weight:normal;color:#3b4555;white-space:nowrap;transform:scaleX(0.9790);transform-origin:0 0;">Jan 23, 2023</div>
<div style="position:absolute;left:2732.94px;top:1334.02px;font-size:21px;line-height:21px;font-weight:normal;color:#3b4555;white-space:nowrap;transform:scaleX(1.0600);transform-origin:0 0;">1</div>
<div style="position:absolute;left:408.00px;top:1465.00px;width:2478.00px;height:1.00px;box-sizing:border-box;background:#e3e6e9"></div>
<div style="position:absolute;left:438.00px;top:1415.02px;font-size:21px;line-height:21px;font-weight:normal;color:#3b4555;white-space:nowrap;transform:scaleX(1.0600);transform-origin:0 0;">420</div>
<div style="position:absolute;left:682.43px;top:1415.02px;font-size:21px;line-height:21px;font-weight:normal;color:#3b4555;white-space:nowrap;transform:scaleX(0.9700);transform-origin:0 0;">GP</div>
<div style="position:absolute;left:900.00px;top:1415.02px;font-size:21px;line-height:21px;font-weight:normal;color:#3b4555;white-space:nowrap;transform:scaleX(0.9700);transform-origin:0 0;">TEST</div>
<div style="position:absolute;left:1131.02px;top:1415.02px;font-size:21px;line-height:21px;font-weight:normal;color:#3b4555;white-space:nowrap;transform:scaleX(0.9850);transform-origin:0 0;">IN HOUSE</div>
<div style="position:absolute;left:1308.60px;top:1415.02px;font-size:21px;line-height:21px;font-weight:normal;color:#3b4555;white-space:nowrap;transform:scaleX(0.9700);transform-origin:0 0;">SXBL</div>
<div style="position:absolute;left:1525.03px;top:1415.02px;font-size:21px;line-height:21px;font-weight:normal;color:#3b4555;white-space:nowrap;transform:scaleX(0.9660);transform-origin:0 0;">OCCUPIED</div>
<div style="position:absolute;left:1837.85px;top:1415.02px;font-size:21px;line-height:21px;font-weight:normal;color:#3b4555;white-space:nowrap;transform:scaleX(0.9460);transform-origin:0 0;">READY</div>
<div style="position:absolute;left:2190.20px;top:1415.02px;font-size:21px;line-height:21px;font-weight:normal;color:#3b4555;white-space:nowrap;transform:scaleX(0.9790);transform-origin:0 0;">Jan 22, 2023</div>
<div style="position:absolute;left:2448.00px;top:1415.02px;font-size:21px;line-height:21px;font-weight:normal;color:#3b4555;white-space:nowrap;transform:scaleX(0.9790);transform-origin:0 0;">Jan 23, 2023</div>
<div style="position:absolute;left:2732.94px;top:1415.02px;font-size:21px;line-height:21px;font-weight:normal;color:#3b4555;white-space:nowrap;transform:scaleX(1.0600);transform-origin:0 0;">1</div>
<div style="position:absolute;left:2438px;top:312px;width:449px;height:626px;box-sizing:border-box;background:#fff;border:1px solid #e3e6e9;border-radius:9px;box-shadow:0 2px 6px rgba(0,0,0,0.04)"></div>
<div style="position:absolute;left:2454.40px;top:340.48px;font-size:24px;line-height:24px;font-weight:bold;color:#2a3a4e;white-space:nowrap;transform:scaleX(0.9115);transform-origin:0 0;">Select Columns</div>
<div style="position:absolute;left:2781.00px;top:325.00px;width:91.00px;height:54.00px;box-sizing:border-box;background:#4b9ad0;border-radius:10px"></div>
<div style="position:absolute;left:2801.92px;top:342.89px;font-size:19.5px;line-height:19.5px;font-weight:bold;color:#ffffff;white-space:nowrap;transform:scaleX(0.9832);transform-origin:0 0;">Done</div>
<div style="position:absolute;left:2454.50px;top:409.00px;width:417.50px;height:60.00px;box-sizing:border-box;background:#fff;border:1.5px solid #cfd6dd;border-radius:10px"></div>
<div style="position:absolute;left:2477.00px;top:428.22px;font-size:21px;line-height:21px;font-weight:normal;color:#9aa5ae;white-space:nowrap;transform:scaleX(0.9839);transform-origin:0 0;">Search</div>
<div style="position:absolute;left:2472.00px;top:485.50px;width:24.00px;height:24.00px;box-sizing:border-box;background:#f7f8f9;border:1.5px solid #ccd2d8;border-radius:3px"></div>
<div style="position:absolute;left:2504.00px;top:489.00px;font-size:21.5px;line-height:21.5px;font-weight:normal;color:#2a3a4e;white-space:nowrap;transform:scaleX(0.9488);transform-origin:0 0;">Select All</div>
<div style="position:absolute;left:2472.00px;top:542.30px;width:24.00px;height:24.00px;box-sizing:border-box;background:#4b9ad0;border-radius:3px"></div>
<svg style="position:absolute;left:2472.00px;top:542.30px;overflow:visible" width="24" height="24" viewBox="0 0 24 24"><path d="M7 12.5 L10.5 16 L17 8.5" fill="none" stroke="#fff" stroke-width="2.4"/></svg>
<div style="position:absolute;left:2503.63px;top:545.70px;font-size:21.5px;line-height:21.5px;font-weight:normal;color:#2a3a4e;white-space:nowrap;transform:scaleX(0.9666);transform-origin:0 0;">Room Number</div>
<div style="position:absolute;left:2756.46px;top:545.75px;font-size:20.5px;line-height:20.5px;font-weight:bold;color:#4a98cf;white-space:nowrap;transform:scaleX(0.9394);transform-origin:0 0;">Freeze</div>
<div style="position:absolute;left:2469.00px;top:582.80px;width:388.00px;height:1.50px;box-sizing:border-box;background:#eef0f2"></div>
<div style="position:absolute;left:2472.00px;top:604.90px;width:24.00px;height:24.00px;box-sizing:border-box;background:#f7f8f9;border:1.5px solid #ccd2d8;border-radius:3px"></div>
<div style="position:absolute;left:2503.63px;top:608.30px;font-size:21.5px;line-height:21.5px;font-weight:normal;color:#2a3a4e;white-space:nowrap;transform:scaleX(0.9701);transform-origin:0 0;">Loyalty Tier</div>
<div style="position:absolute;left:2756.46px;top:608.35px;font-size:20.5px;line-height:20.5px;font-weight:bold;color:#d3d5d8;white-space:nowrap;transform:scaleX(0.9394);transform-origin:0 0;">Freeze</div>
<div style="position:absolute;left:2469.00px;top:645.40px;width:388.00px;height:1.50px;box-sizing:border-box;background:#eef0f2"></div>
<div style="position:absolute;left:2472.00px;top:667.50px;width:24.00px;height:24.00px;box-sizing:border-box;background:#f7f8f9;border:1.5px solid #ccd2d8;border-radius:3px"></div>
<div style="position:absolute;left:2503.63px;top:670.90px;font-size:21.5px;line-height:21.5px;font-weight:normal;color:#2a3a4e;white-space:nowrap;transform:scaleX(0.9744);transform-origin:0 0;">Digital Key</div>
<div style="position:absolute;left:2756.46px;top:670.95px;font-size:20.5px;line-height:20.5px;font-weight:bold;color:#d3d5d8;white-space:nowrap;transform:scaleX(0.9394);transform-origin:0 0;">Freeze</div>
<div style="position:absolute;left:2469.00px;top:708.00px;width:388.00px;height:1.50px;box-sizing:border-box;background:#eef0f2"></div>
<div style="position:absolute;left:2472.00px;top:730.10px;width:24.00px;height:24.00px;box-sizing:border-box;background:#4b9ad0;border-radius:3px"></div>
<svg style="position:absolute;left:2472.00px;top:730.10px;overflow:visible" width="24" height="24" viewBox="0 0 24 24"><path d="M7 12.5 L10.5 16 L17 8.5" fill="none" stroke="#fff" stroke-width="2.4"/></svg>
<div style="position:absolute;left:2503.65px;top:733.50px;font-size:21.5px;line-height:21.5px;font-weight:normal;color:#2a3a4e;white-space:nowrap;transform:scaleX(0.9500);transform-origin:0 0;">Last Name</div>
<div style="position:absolute;left:2756.46px;top:733.55px;font-size:20.5px;line-height:20.5px;font-weight:bold;color:#4a98cf;white-space:nowrap;transform:scaleX(0.9394);transform-origin:0 0;">Freeze</div>
<div style="position:absolute;left:2469.00px;top:770.60px;width:388.00px;height:1.50px;box-sizing:border-box;background:#eef0f2"></div>
<div style="position:absolute;left:2472.00px;top:792.70px;width:24.00px;height:24.00px;box-sizing:border-box;background:#4b9ad0;border-radius:3px"></div>
<svg style="position:absolute;left:2472.00px;top:792.70px;overflow:visible" width="24" height="24" viewBox="0 0 24 24"><path d="M7 12.5 L10.5 16 L17 8.5" fill="none" stroke="#fff" stroke-width="2.4"/></svg>
<div style="position:absolute;left:2503.63px;top:796.10px;font-size:21.5px;line-height:21.5px;font-weight:normal;color:#2a3a4e;white-space:nowrap;transform:scaleX(0.9732);transform-origin:0 0;">First Name</div>
<div style="position:absolute;left:2756.46px;top:796.15px;font-size:20.5px;line-height:20.5px;font-weight:bold;color:#4a98cf;white-space:nowrap;transform:scaleX(0.9394);transform-origin:0 0;">Freeze</div>
<div style="position:absolute;left:2469.00px;top:833.20px;width:388.00px;height:1.50px;box-sizing:border-box;background:#eef0f2"></div>
<div style="position:absolute;left:2472.00px;top:855.30px;width:24.00px;height:24.00px;box-sizing:border-box;background:#4b9ad0;border-radius:3px"></div>
<svg style="position:absolute;left:2472.00px;top:855.30px;overflow:visible" width="24" height="24" viewBox="0 0 24 24"><path d="M7 12.5 L10.5 16 L17 8.5" fill="none" stroke="#fff" stroke-width="2.4"/></svg>
<div style="position:absolute;left:2504.60px;top:858.70px;font-size:21.5px;line-height:21.5px;font-weight:normal;color:#2a3a4e;white-space:nowrap;transform:scaleX(0.9285);transform-origin:0 0;">Status</div>
<div style="position:absolute;left:2756.46px;top:858.75px;font-size:20.5px;line-height:20.5px;font-weight:bold;color:#4a98cf;white-space:nowrap;transform:scaleX(0.9394);transform-origin:0 0;">Freeze</div>
<div style="position:absolute;left:2469.00px;top:895.80px;width:388.00px;height:1.50px;box-sizing:border-box;background:#eef0f2"></div>
<div style="position:absolute;left:2438.50px;top:311.00px;width:480.00px;height:617.00px;box-sizing:border-box;border:5px solid #000"></div>
</body></html>
